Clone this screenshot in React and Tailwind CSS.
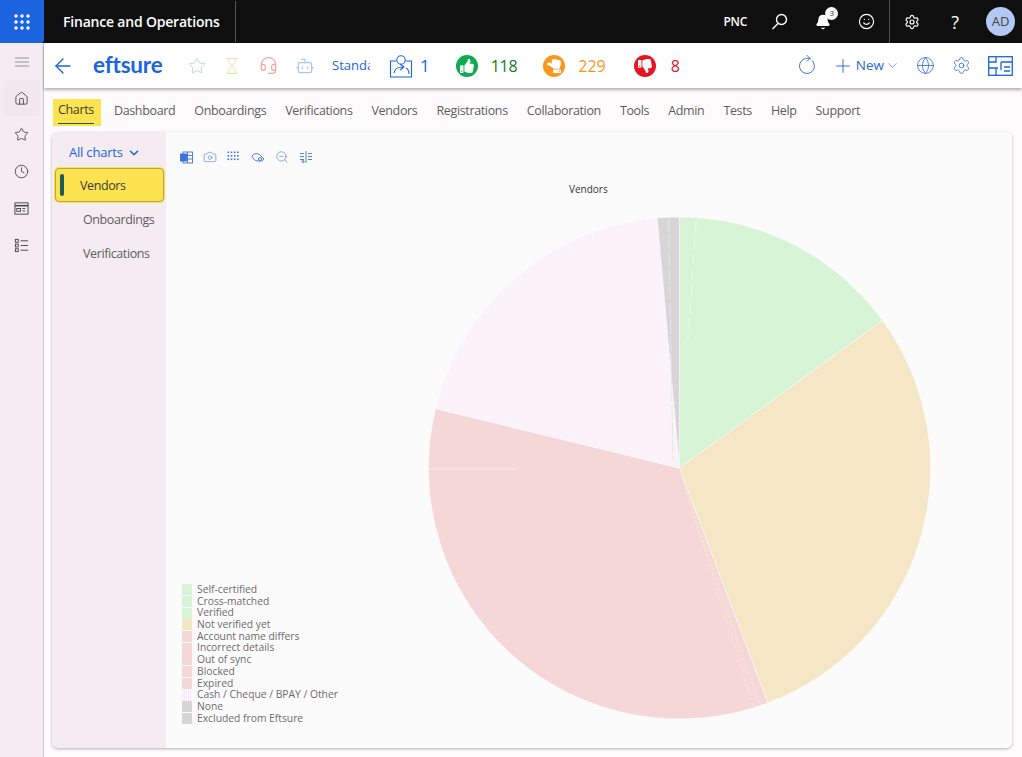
import {
  Bell, ChevronDown, Clock, Globe, Home, Hourglass, Headset, Bot, Plus, RotateCw, Settings, Smile, Star, ArrowLeft, Camera, ZoomOut,
} from "lucide-react"
import { FaThumbsUp, FaThumbsDown } from "react-icons/fa"

const font = { fontFamily: '"Open Sans", "Noto Sans", sans-serif' }

const tabs = ["Dashboard", "Onboardings", "Verifications", "Vendors", "Registrations", "Collaboration", "Tools", "Admin", "Tests", "Help", "Support"]

const legend = [
  ["Self-certified", "bg-[#d7f5d6]"],
  ["Cross-matched", "bg-[#d7f5d6]"],
  ["Verified", "bg-[#d7f5d6]"],
  ["Not verified yet", "bg-[#f5e6c6]"],
  ["Account name differs", "bg-[#f5d7d8]"],
  ["Incorrect details", "bg-[#f5d7d8]"],
  ["Out of sync", "bg-[#f5d7d8]"],
  ["Blocked", "bg-[#f5d7d8]"],
  ["Expired", "bg-[#f5d7d8]"],
  ["Cash / Cheque / BPAY / Other", "bg-[repeating-linear-gradient(90deg,#f8e8f3_0_1px,#fdfbfd_1px_2px)]"],
  ["None", "bg-[#d6d6d6]"],
  ["Excluded from Eftsure", "bg-[#d6d6d6]"],
]

const slices = [
  [0, 54, "#d7f5d6"],
  [54, 159.4, "#f5e6c6"],
  [159.4, 283.7, "#f5d7d8"],
  [283.7, 354.9, "url(#hatch)"],
  [354.9, 360, "#d6d6d6"],
]

const cx = 679.5
const cy = 468
const r = 251

function pt(deg) {
  const a = (deg * Math.PI) / 180
  return `${(cx + r * Math.sin(a)).toFixed(2)} ${(cy - r * Math.cos(a)).toFixed(2)}`
}

function Pie() {
  return (
    <svg width="520" height="520" viewBox="420 208 520 520" className="block">
      <defs>
        <pattern id="hatch" width="2" height="2" patternUnits="userSpaceOnUse">
          <rect width="2" height="2" fill="#fdfbfd" />
          <rect width="1" height="1" fill="#f9eaf5" />
          <rect x="1" y="1" width="1" height="1" fill="#f9eaf5" />
        </pattern>
      </defs>
      {slices.map(([a, b, fill]) => (
        <path key={a} d={`M${cx} ${cy} L${pt(a)} A${r} ${r} 0 0 1 ${pt(b)} Z`} fill={fill} stroke="#fbfafb" strokeWidth="0.6" />
      ))}
      <path d="M668.5 218L673 460" stroke="#e6e6e6" strokeDasharray="14 3" />
      <path d="M696 222L688 340" stroke="#effbee" strokeDasharray="10 6" />
      <path d="M682 478L754 708M682 478L760 706" stroke="#f7ebd6" strokeDasharray="3 2" strokeWidth="0.8" />
      <path d="M430 469H516" stroke="#fae9e9" />
    </svg>
  )
}

function ThumbBadge({ color, rotate, down }) {
  const Icon = down ? FaThumbsDown : FaThumbsUp
  return (
    <span className={`flex h-[22px] w-[22px] items-center justify-center rounded-full ${color}`}>
      <Icon className={`h-[14px] w-[14px] text-white ${rotate ? "-rotate-90" : ""}`} />
    </span>
  )
}

function DotGrid({ cols, className }) {
  const dots = []
  for (let y = 0; y < 3; y++) for (let x = 0; x < cols; x++) dots.push(<rect key={`${x}-${y}`} x={x * 3.2 + 0.5} y={y * 3.5 + 1.5} width="1.6" height="1.6" />)
  return <svg className={className} viewBox="0 0 14 14" fill="currentColor">{dots}</svg>
}

export default function App() {
  return (
    <div className="flex h-[757px] w-[1022px] flex-col overflow-hidden bg-[#fdfcfd] text-[#5d5d5d]" style={font}>
      {/* top bar */}
      <header className="flex h-[43px] shrink-0 items-center bg-[#0f0f0f] text-white">
        <div className="flex h-[43px] w-[44px] items-center justify-center rounded-br-[3px] bg-[#1a64e0]">
          <svg className="h-[16px] w-[16px]" viewBox="0 0 16 16" fill="currentColor">
            {[2, 8, 14].map((y) => [2, 8, 14].map((x) => <circle key={`${x}${y}`} cx={x} cy={y} r="1.7" />))}
          </svg>
        </div>
        <div className="ml-[19px] flex h-[41px] w-[173px] items-center border-r border-[#555] text-[14px] font-semibold tracking-[-0.2px]">Finance and Operations</div>
        <div className="ml-auto mr-[7px] flex h-full items-center">
          <span className="mr-[24px] text-[12px] font-semibold tracking-[-0.2px]">PNC</span>
          <svg className="mr-[27px] h-[17px] w-[17px]" viewBox="0 0 17 17" fill="none" stroke="currentColor" strokeWidth="1.4"><circle cx="10.5" cy="6.5" r="5" /><path d="M7 10.5L1.5 16" /></svg>
          <span className="relative mr-[27px]">
            <Bell className="h-[16px] w-[16px] fill-white" strokeWidth={1.8} />
            <span className="absolute -right-[7px] -top-[7px] flex h-[13px] w-[13px] items-center justify-center rounded-full bg-white text-[8px] text-[#333]">3</span>
          </span>
          <Smile className="mr-[14px] h-[17px] w-[17px]" strokeWidth={1.6} />
          <div className="flex h-full items-center border-l border-[#555] pl-[14px]">
            <Settings className="mr-[31px] h-[16px] w-[16px]" strokeWidth={1.8} />
            <span className="mr-[27px] text-[18px] leading-none">?</span>
            <span className="flex h-[29px] w-[29px] items-center justify-center rounded-full bg-[#b3c9f3] text-[13px] text-[#444]">AD</span>
          </div>
        </div>
      </header>

      <div className="flex min-h-0 flex-1">
        {/* nav rail */}
        <nav className="flex w-[44px] shrink-0 flex-col items-center border-r border-[#c9c6c9] bg-[#f5ecf1] pt-[11px] text-[#444]">
          <svg className="h-[16px] w-[16px] text-[#8a8a8a]" viewBox="0 0 16 16" stroke="currentColor" strokeWidth="0.9"><path d="M1 4h14M1 8h14M1 12h14" /></svg>
          <div className="mt-[10px] flex h-[36px] w-[36px] items-center justify-center rounded bg-[#f1e8ed]"><Home className="h-[15px] w-[15px]" strokeWidth={1.4} /></div>
          <Star className="mt-[11px] h-[15px] w-[15px]" strokeWidth={1.4} />
          <Clock className="mt-[22px] h-[15px] w-[15px]" strokeWidth={1.4} />
          <svg className="mt-[22px] h-[15px] w-[15px]" viewBox="0 0 16 16" fill="none" stroke="currentColor"><rect x="1" y="2" width="14" height="12" /><path d="M1 5h14" strokeWidth="1.6" /><rect x="3" y="8" width="4" height="3" /><path d="M9 8h3M9 10.5h3" /></svg>
          <svg className="mt-[22px] h-[15px] w-[15px]" viewBox="0 0 16 16" fill="none" stroke="currentColor"><rect x="1.5" y="1.5" width="3" height="3" /><rect x="1.5" y="6.5" width="3" height="3" /><rect x="1.5" y="11.5" width="3" height="3" /><path d="M7 3h8M7 8h8M7 13h8" /></svg>
        </nav>

        <main className="flex min-w-0 flex-1 flex-col bg-[#fdfbfc]">
          {/* command bar */}
          <div className="relative z-10 flex h-[45px] shrink-0 items-center bg-white pl-[7px] pr-[9px] shadow-[0_2px_3px_rgba(0,0,0,0.3)]">
            <ArrowLeft className="h-[24px] w-[24px] text-[#1a64e0]" strokeWidth={1.4} />
            <span className="ml-[18px] w-[72px] text-[22.5px] font-bold leading-none tracking-[-0.2px] text-[#1a64e6]" style={{ fontFamily: '"Lato", sans-serif' }}>eftsure</span>
            <Star className="ml-[23px] h-[18px] w-[18px] text-[#b9dcb8]" strokeWidth={1.3} />
            <Hourglass className="ml-[17px] h-[18px] w-[18px] text-[#f6dfa9]" strokeWidth={1.3} />
            <Headset className="ml-[18px] h-[19px] w-[19px] text-[#f7a4a4]" strokeWidth={1.6} />
            <Bot className="ml-[17px] h-[20px] w-[20px] text-[#a9c8ef]" strokeWidth={1.5} />
            <span className="ml-[17px] w-[38px] overflow-hidden whitespace-nowrap text-[13px] text-[#1a64e0]">Standard</span>
            <svg className="ml-[19px] h-[24px] w-[24px] text-[#1a64e0]" viewBox="0 0 24 24" fill="none" stroke="currentColor" strokeWidth="1.1"><circle cx="12" cy="6" r="4.2" fill="white" /><path d="M7 7H1.5v16h21V7H17" /><path d="M5 19c1-5 4-6 9-6M11 10l4 3-4 3M20 20c0-3-1-5-3-6" /></svg>
            <span className="ml-[7px] text-[17px] text-[#1a64e0]">1</span>
            <span className="ml-[26px]"><ThumbBadge color="bg-[#0cab4f]" /></span>
            <span className="ml-[13px] text-[16px] tracking-[-0.3px] text-[#117c1a]">118</span>
            <span className="ml-[26px]"><ThumbBadge color="bg-[#fa981d]" rotate /></span>
            <span className="ml-[13px] text-[16px] text-[#fa981d]">229</span>
            <span className="ml-[28px]"><ThumbBadge color="bg-[#e8141f]" down /></span>
            <span className="ml-[15px] text-[16px] text-[#e8141f]">8</span>
            <div className="ml-auto flex items-center text-[#2a65d8]">
              <RotateCw className="h-[20px] w-[20px] -rotate-45" strokeWidth={1} />
              <Plus className="ml-[15px] h-[22px] w-[22px]" strokeWidth={1} />
              <span className="ml-[2px] text-[13.5px]">New</span>
              <ChevronDown className="ml-[1px] h-[15px] w-[15px]" strokeWidth={1} />
              <Globe className="ml-[16px] h-[19px] w-[19px]" strokeWidth={1} />
              <Settings className="ml-[17px] h-[19px] w-[19px]" strokeWidth={1} />
              <svg className="ml-[17px] h-[20px] w-[25px] text-[#1a64e0]" viewBox="0 0 25 20" fill="none" stroke="currentColor" strokeWidth="1.3"><rect x="0.7" y="0.7" width="23.6" height="18.6" /><path d="M1 6h7M8 1v6M13 6h11M13 6v8M1 12h9M8 12v7M16 11h6M16 15h6" /></svg>
            </div>
          </div>

          {/* tabs */}
          <div className="flex h-[44px] shrink-0 items-center gap-[19px] pl-[9px] pt-[2px] text-[12.5px] tracking-[-0.35px]">
            <span className="mr-[-6px] mt-[2px] flex h-[27px] items-stretch bg-[#fde34f] pb-[2px] pl-[5px] pr-[7px] text-[#3a3a3a]">
              <span className="flex items-center border-b border-[#1d5c54]">Charts</span>
            </span>
            {tabs.map((t) => <span key={t}>{t}</span>)}
          </div>

          {/* card */}
          <div className="ml-[8px] mr-[10px] flex h-[616px] overflow-hidden rounded-[6px] shadow-[0_1px_3px_rgba(0,0,0,0.3)]">
            <aside className="w-[114px] shrink-0 bg-[#f5ecf1] text-[12.5px] tracking-[-0.4px]">
              <div className="flex h-[36px] items-center pl-[17px] pt-[5px] text-[13px] tracking-[-0.2px] text-[#1a64e0]">
                All charts
                <ChevronDown className="ml-[4px] h-[14px] w-[14px]" strokeWidth={2.6} />
              </div>
              <div className="ml-[3px] flex h-[34px] w-[109px] items-center rounded-[4px] border border-[#b0a84c] bg-[#fde34f] text-[#3a3a3a] shadow-[0_0_0_1px_#fde34f]">
                <span className="ml-[4px] h-[22px] w-[4px] rounded-[2px] bg-[#1d5c54]" />
                <span className="ml-[16px] pt-[2px]">Vendors</span>
              </div>
              <div className="flex h-[35px] items-center pl-[31px] pt-[2px]">Onboardings</div>
              <div className="flex h-[34px] items-center pl-[31px]">Verifications</div>
            </aside>
            <section className="flex min-w-0 flex-1 flex-col bg-[#fcfbfc]">
              <div className="flex h-[50px] shrink-0 items-center gap-[10px] pl-[14px] text-[#3d72d8]">
                <svg className="h-[13px] w-[13px]" viewBox="0 0 13 13" fill="none" stroke="currentColor" strokeWidth="0.9"><rect x="3" y="1" width="9.5" height="11" /><path d="M3 4.5h9.5M3 8h9.5M7.5 1v11" /><rect x="0.5" y="3" width="6" height="7" fill="#3d72d8" /></svg>
                <Camera className="h-[14px] w-[14px]" strokeWidth={1} />
                <DotGrid cols={4} className="h-[14px] w-[14px]" />
                <svg className="h-[14px] w-[14px]" viewBox="0 0 14 14" fill="none" stroke="currentColor" strokeWidth="0.9"><path d="M1 6c2-3 6-3 8-1l4 4-2 2H7C4 11 2 9 1 6z" /><circle cx="9" cy="9" r="1.5" /></svg>
                <ZoomOut className="h-[14px] w-[14px]" strokeWidth={1} />
                <svg className="h-[14px] w-[14px]" viewBox="0 0 14 14" fill="none" stroke="currentColor" strokeWidth="0.9"><path d="M7 1v12M1 3.5h4M9 3.5h4M1 6.5h4M9 6.5h4M1 9.5h4M9 9.5h4" /><circle cx="4" cy="11.5" r="1" /></svg>
              </div>
              <div className="relative flex-1">
                <p className="pl-[403px] text-[10px] text-[#333]">Vendors</p>
                <div className="absolute left-[254px] top-[26px]"><Pie /></div>
                <ul className="absolute left-[16px] top-[402px] text-[10.3px] leading-[11.7px] text-[#6b6b6b]">
                  {legend.map(([label, color]) => (
                    <li key={label} className="flex h-[11.7px] items-center whitespace-nowrap">
                      <span className={`mr-[5px] h-[11px] w-[10px] ${color}`} />
                      {label}
                    </li>
                  ))}
                </ul>
              </div>
            </section>
          </div>
        </main>
      </div>
    </div>
  )
}
